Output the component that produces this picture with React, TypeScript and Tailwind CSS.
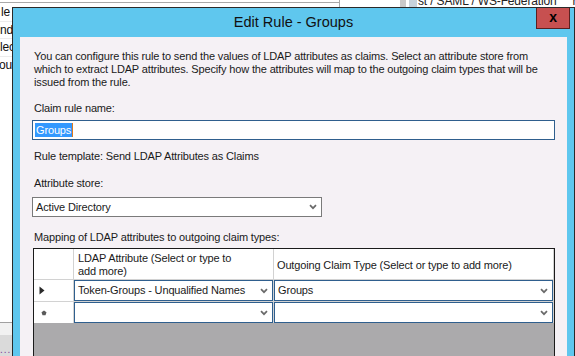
import React from 'react';

const Chevron = () => (
  <svg width="8" height="6" viewBox="0 0 8 6" className="shrink-0">
    <path d="M1 1.2l3 3 3-3" fill="none" stroke="#6a6a6a" strokeWidth="1.7" />
  </svg>
);

// combo box used in the grid rows
const GridCombo = ({ value }: { value?: string }) => (
  <div className="flex h-full items-center justify-between border border-[#2f5f8e] bg-white pl-[3px] pr-[4px]">
    <span className="whitespace-nowrap leading-none">{value}</span>
    <Chevron />
  </div>
);

const BehindWindow = () => (
  <div className="flex h-full w-full flex-col">
    {/* top strip of the window behind */}
    <div className="relative h-[7px] shrink-0 overflow-hidden">
      <div className="absolute left-0 top-[2px] h-px w-[339px] bg-[#a9a9a9]" />
      <div className="absolute left-[339px] top-0 h-[7px] w-px bg-[#a9a9a9]" />
      <div className="absolute left-[400px] top-0 h-[7px] w-[6px] bg-[#c9c9c9]" />
      <div className="absolute left-[409px] top-0 h-[7px] w-[8px] bg-[#c8d3dc]" />
      <div className="absolute left-[418px] top-[-5px] whitespace-nowrap text-[12px] leading-[13px] text-[#222]">
        st / SAML / WS-Federation&nbsp;&nbsp;&nbsp;&nbsp;&nbsp;htt
      </div>
    </div>
    {/* left strip list */}
    <div className="flex w-[12px] flex-1 flex-col overflow-hidden">
      <div className="flex flex-col text-[12px] leading-[16.5px] text-[#111]">
        <span className="mt-[-3px] border-b border-[#ececec] pl-[1px]">le</span>
        <span className="border-b border-[#ececec]">nd</span>
        <span className="border-b border-[#ececec]">lec</span>
        <span className="ml-[-1px]">oup</span>
      </div>
      <div className="flex-1" />
      <div className="h-[13px] border-t border-[#a0a0a0] bg-[#f1f1f1]" />
      <div className="h-[21px] bg-[#dadada] pt-[10px] text-[10px] leading-[10px] tracking-[1px] text-[#7a3a9a]">...</div>
    </div>
  </div>
);

export default function App() {
  return (
    <div className="relative h-[356px] w-[575px] overflow-hidden bg-white font-['Liberation_Sans',Arial,sans-serif] text-[11px] tracking-[-0.15px] text-black">
      <BehindWindow />

      {/* Edit Rule dialog */}
      <div className="absolute left-[12px] top-[7px] flex h-[360px] w-[563px] flex-col border border-[#2a2a2a] bg-[#5fc7ee]">
        <div className="relative flex h-[29px] shrink-0 items-center justify-center pb-[1px]">
          <span className="text-[14.5px] leading-none tracking-normal text-[#111]">Edit Rule - Groups</span>
          <div className="absolute right-[4px] top-0 flex h-[21px] w-[34px] items-center justify-center border border-t-0 border-[#5a2020] bg-[#c75050]">
            <span className="mt-[-2px] text-[14px] font-bold leading-none text-black">x</span>
          </div>
        </div>

        <div className="mx-[7px] flex flex-1 flex-col bg-[#f5f1f5] pl-[12px] pr-[12px] pt-[13px] text-[#1a1a1a]">
          <p className="whitespace-nowrap pl-[2px] leading-[13px]">
            You can configure this rule to send the values of LDAP attributes as claims. Select an attribute store from
            <br />
            which to extract LDAP attributes. Specify how the attributes will map to the outgoing claim types that will be
            <br />
            issued from the rule.
          </p>

          <div className="mt-[13px] pl-[2px] leading-[13px]">Claim rule name:</div>
          <div className="mt-[5px] flex h-[20px] items-center border border-[#2f5f8e] bg-white pl-[2px]">
            <span className="flex h-[14px] items-center border-r border-[#e07a1a] bg-[#3399ff] pl-px pr-[1px] leading-none text-white">
              Groups
            </span>
          </div>

          <div className="mt-[10px] pl-[2px] leading-[13px]">Rule template: Send LDAP Attributes as Claims</div>

          <div className="mt-[14px] pl-[2px] leading-[13px]">Attribute store:</div>
          <div className="mt-[7px] flex h-[20px] w-[290px] items-center justify-between border border-[#7a7a7a] bg-white pl-[3px] pr-[4px]">
            <span className="leading-none">Active Directory</span>
            <Chevron />
          </div>

          <div className="mt-[14px] pl-[2px] leading-[13px]">Mapping of LDAP attributes to outgoing claim types:</div>

          <div className="ml-[1px] mt-[4px] flex w-[522px] flex-1 flex-col border border-[#1b1b1b] bg-[#abaaac]">
            <div className="grid grid-cols-[39px_199px_279px] grid-rows-[30px_21px_21px] gap-px bg-[#d2d2d2]">
              <div className="bg-white" />
              <div className="flex flex-col justify-center bg-white pl-[4px] pt-[1px] leading-[13px]">
                <span>LDAP Attribute (Select or type to</span>
                <span>add more)</span>
              </div>
              <div className="flex items-center bg-white pl-[3px] pt-[2px] leading-[13px]">
                Outgoing Claim Type (Select or type to add more)
              </div>

              <div className="flex items-center bg-white pl-[5px]">
                <svg width="6" height="9" viewBox="0 0 6 9">
                  <path d="M0.5 0.5L5.5 4.5L0.5 8.5Z" fill="#2a2a2a" />
                </svg>
              </div>
              <GridCombo value="Token-Groups - Unqualified Names" />
              <GridCombo value="Groups" />

              <div className="flex items-center bg-white pl-[7px]">
                <svg width="6" height="6" viewBox="0 0 6 6">
                  <path d="M3 0.5L5.5 2.3L4.5 5.3H1.5L0.5 2.3Z" fill="#5a5a5a" />
                </svg>
              </div>
              <GridCombo />
              <GridCombo />
            </div>
          </div>
        </div>
      </div>
    </div>
  );
}
